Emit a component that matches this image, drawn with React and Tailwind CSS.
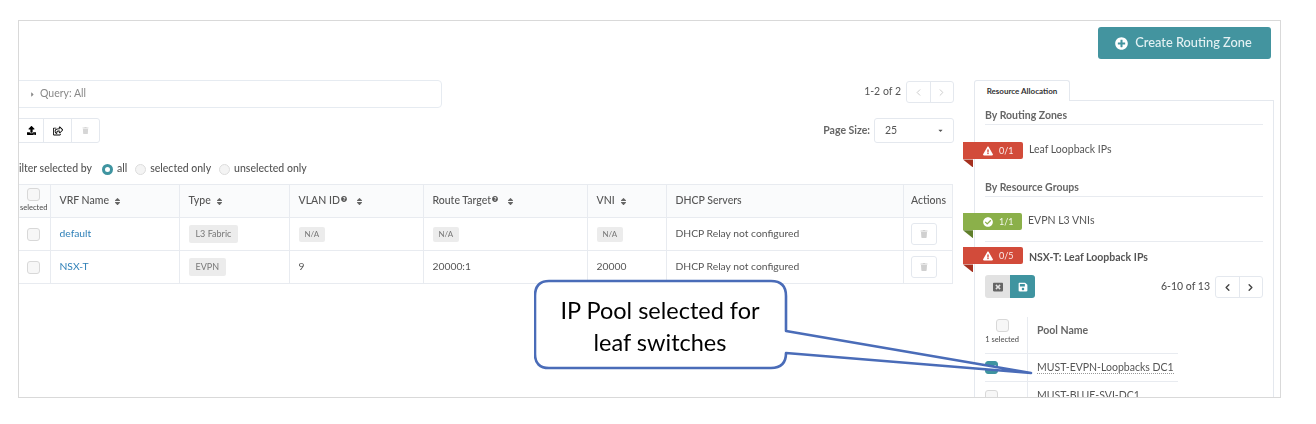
import React from "react";
import {
  FaPlusCircle,
  FaUpload,
  FaRegShareSquare,
  FaTrash,
  FaExclamationTriangle,
  FaCheckCircle,
  FaSave,
  FaWindowClose,
  FaSort,
  FaQuestionCircle,
  FaCaretRight,
  FaCaretDown,
  FaCheck,
} from "react-icons/fa";
import { FiChevronLeft, FiChevronRight } from "react-icons/fi";

const Checkbox = ({ checked }) => (
  <span
    className={`block w-[13px] h-[13px] rounded-[3px] border ${
      checked ? "bg-[#3f94a0] border-[#3f94a0]" : "bg-[#f7f7f7] border-[#d8d8d8]"
    }`}
  >
    {checked && <FaCheck className="text-white text-[8px] m-[2px]" />}
  </span>
);

const Radio = ({ checked }) =>
  checked ? (
    <span className="block w-[11px] h-[11px] rounded-full border-[3px] border-[#3f94a0] bg-white" />
  ) : (
    <span className="block w-[11px] h-[11px] rounded-full border border-[#dcdcdc] bg-[#f4f4f4]" />
  );

const Badge = ({ children, className = "" }) => (
  <span className={`inline-block bg-[#ececec] rounded-[2px] text-[#777] ${className}`}>{children}</span>
);

const Pager = ({ dim }) => (
  <div className={`flex w-[48px] h-[22px] border border-[#e4e8ee] rounded-[3px] bg-white ${dim ? "text-[#c8c8c8]" : "text-[#444]"}`}>
    <span className="flex-1 flex items-center justify-center border-r border-[#e4e8ee]">
      <FiChevronLeft className="text-[11px]" strokeWidth={dim ? 2 : 3} />
    </span>
    <span className="flex-1 flex items-center justify-center">
      <FiChevronRight className="text-[11px]" strokeWidth={dim ? 2 : 3} />
    </span>
  </div>
);

const Ribbon = ({ green, width, label, icon }) => (
  <div className={`relative -ml-[22px] h-[17px] rounded-r-[2px] flex items-center text-white text-[9px] ${width} ${green ? "bg-[#8bb04a]" : "bg-[#d24b3a]"}`}>
    <span className="ml-[20px] mr-[6px] text-[10px]">{icon}</span>
    <span className="opacity-90">{label}</span>
    <span
      className={`absolute left-0 top-full w-[10px] h-[8px] [clip-path:polygon(0_0,100%_0,100%_100%)] ${
        green ? "bg-[#5f7f2b]" : "bg-[#a5301f]"
      }`}
    />
  </div>
);

const HeadCell = ({ label, help, sort = true, className = "" }) => (
  <th className={`border-r border-[#e8ebf0] pl-[9px] pr-[7px] text-left font-medium text-[10.5px] text-[#555] ${className}`}>
    <span className="flex items-center">
      {label}
      {help && <FaQuestionCircle className="text-[6px] ml-[1px] -mt-[5px] text-[#555]" />}
      {sort && <FaSort className={`text-[9px] text-[#666] ${help ? "ml-[8px]" : "ml-[4px]"}`} />}
    </span>
  </th>
);

const TrashBtn = () => (
  <span className="flex items-center justify-center w-[26px] h-[22px] ml-[7px] border border-[#e4e8ee] rounded-[3px]">
    <FaTrash className="text-[8px] text-[#d0d0d0]" />
  </span>
);

const rows = [
  { name: "default", type: "L3 Fabric", vlan: null, rt: null, vni: null },
  { name: "NSX-T", type: "EVPN", vlan: "9", rt: "20000:1", vni: "20000" },
];

const NA = () => <Badge className="text-[8px] leading-[15px] px-[6px]">N/A</Badge>;

const Callout = () => (
  <div className="absolute left-[534px] top-[279px] w-[500px] h-[96px]">
    <svg width="500" height="96" className="absolute inset-0">
      <path
        d="M15 2 H237 Q252 2 252 17 V52 L497 94 L252 74 V74 Q252 89 237 89 H15 Q1 89 1 75 V17 Q1 2 15 2 Z"
        fill="white"
        stroke="#4a6cb8"
        strokeWidth="2.6"
        strokeLinejoin="round"
      />
    </svg>
    <div className="absolute left-0 top-[15px] w-[252px] text-center text-[23.5px] leading-[32px] text-black">
      IP Pool selected for
      <br />
      leaf switches
    </div>
  </div>
);

export default function App() {
  return (
    <div className="relative bg-white w-[1316px] h-[424px] pt-[20px] pl-[18px] font-['Lato',sans-serif] text-[#555]">
      <div className="w-[1263px] h-[378px] border border-[#d9d9d9] overflow-hidden">
        <div className="flex flex-col h-full blur-[0.4px]">
          <div className="flex justify-end pt-[6px] pr-[9px]">
            <button className="flex items-center justify-center w-[173px] h-[32px] pr-[2px] rounded-[3px] bg-[#43949f] text-[#e4f1f3] text-[12.8px] font-medium">
              <FaPlusCircle className="text-[13px] mr-[7px] text-white" />
              Create Routing Zone
            </button>
          </div>

          <div className="flex mt-[21px] gap-[20px]">
            <div className="w-[935px] shrink-0">
              <div className="flex justify-between items-start h-[28px]">
                <div className="-ml-[8px] w-[431px] h-[28px] border border-[#e6ebf1] rounded-[4px] flex items-center pl-[17px] text-[10.5px] text-[#888]">
                  <FaCaretRight className="text-[7px] mr-[4px]" />
                  Query: All
                </div>
                <div className="flex items-center mt-[1px] text-[10.5px]">
                  <span className="mr-[5px]">1-2 of 2</span>
                  <Pager dim />
                </div>
              </div>

              <div className="flex justify-between items-center mt-[10px] h-[25px]">
                <div className="-ml-[8px] flex h-[25px] w-[89px] border border-[#e4e8ee] rounded-[3px]">
                  <span className="w-[32px] flex items-center justify-center pl-[8px] border-r border-[#e4e8ee] text-black">
                    <FaUpload className="text-[9px]" />
                  </span>
                  <span className="w-[28px] flex items-center justify-center border-r border-[#e4e8ee] text-black">
                    <FaRegShareSquare className="text-[10px]" />
                  </span>
                  <span className="flex-1 flex items-center justify-center text-[#d6d6d6]">
                    <FaTrash className="text-[7px]" />
                  </span>
                </div>
                <div className="flex items-center text-[10.5px]">
                  <span className="font-bold mr-[4px] text-[#666]">Page Size:</span>
                  <div className="flex items-center justify-between w-[80px] h-[25px] border border-[#e4e8ee] rounded-[3px] pl-[10px] pr-[9px]">
                    25
                    <FaCaretDown className="text-[7px]" />
                  </div>
                </div>
              </div>

              <div className="flex items-center mt-[18px] h-[16px] -ml-[6px] text-[10.5px] font-medium whitespace-nowrap">
                <span className="mr-[10px]">Filter selected by</span>
                <Radio checked />
                <span className="ml-[4px] mr-[8px]">all</span>
                <Radio />
                <span className="ml-[4px] mr-[8px]">selected only</span>
                <Radio />
                <span className="ml-[4px]">unselected only</span>
              </div>

              <table className="mt-[7px] -ml-px w-[934px] table-fixed border-collapse text-[10.3px]">
                <colgroup>
                  <col className="w-[32px]" />
                  <col className="w-[129px]" />
                  <col className="w-[110px]" />
                  <col className="w-[134px]" />
                  <col className="w-[164px]" />
                  <col className="w-[79px]" />
                  <col className="w-[237px]" />
                  <col className="w-[49px]" />
                </colgroup>
                <thead>
                  <tr className="h-[33px] bg-[#fafbfc] border-y border-[#e8ebf0]">
                    <th className="border-r border-[#e8ebf0] font-normal">
                      <span className="flex flex-col items-center">
                        <Checkbox />
                        <span className="text-[7.5px] mt-[1px] font-medium">selected</span>
                      </span>
                    </th>
                    <HeadCell label="VRF Name" />
                    <HeadCell label="Type" />
                    <HeadCell label="VLAN ID" help />
                    <HeadCell label="Route Target" help />
                    <HeadCell label="VNI" />
                    <HeadCell label="DHCP Servers" sort={false} />
                    <th className="border-r border-[#e8ebf0] pl-[2px] text-center font-medium text-[10.5px] text-[#555]">Actions</th>
                  </tr>
                </thead>
                <tbody>
                  {rows.map((row) => (
                    <tr key={row.name} className="h-[33px] border-b border-[#e8ebf0]">
                      <td className="border-r border-[#e8ebf0]">
                        <span className="flex justify-center">
                          <Checkbox />
                        </span>
                      </td>
                      <td className="border-r border-[#e8ebf0] pl-[9px] pr-[7px] text-[#2f80b8]">{row.name}</td>
                      <td className="border-r border-[#e8ebf0] pl-[9px] pr-[7px]">
                        <Badge className="text-[9px] leading-[18px] px-[7px]">{row.type}</Badge>
                      </td>
                      <td className="border-r border-[#e8ebf0] pl-[9px] pr-[7px]">{row.vlan || <NA />}</td>
                      <td className="border-r border-[#e8ebf0] pl-[9px] pr-[7px]">{row.rt || <NA />}</td>
                      <td className="border-r border-[#e8ebf0] pl-[9px] pr-[7px]">{row.vni || <NA />}</td>
                      <td className="border-r border-[#e8ebf0] pl-[9px] pr-[7px]">DHCP Relay not configured</td>
                      <td className="border-r border-[#e8ebf0]">
                        <TrashBtn />
                      </td>
                    </tr>
                  ))}
                </tbody>
              </table>
            </div>

            <div className="w-[300px] shrink-0">
              <div className="w-[96px] h-[21px] border border-b-0 border-[#e4e8ee] rounded-t-[3px] flex items-center justify-center text-[8px] font-bold text-[#333] whitespace-nowrap bg-white relative z-10 -mb-px">
                Resource Allocation
              </div>
              <div className="border border-[#e4e8ee] h-[320px] pl-[10px] pr-[10px] pt-[7px] text-[10.5px]">
                <div className="font-bold text-[#666] pb-[3px] h-[17px] border-b border-[#e8ebf0]">By Routing Zones</div>
                <div className="flex items-center mt-[17px] gap-[6px]">
                  <Ribbon width="w-[60px]" label="0/1" icon={<FaExclamationTriangle />} />
                  <span className="mb-[2px]">Leaf Loopback IPs</span>
                </div>
                <div className="font-bold text-[#666] mt-[20px] h-[17px] border-b border-[#e8ebf0]">By Resource Groups</div>
                <div className="flex items-center mt-[16px] gap-[6px]">
                  <Ribbon green width="w-[59px]" label="1/1" icon={<FaCheckCircle />} />
                  <span className="mb-[2px]">EVPN L3 VNIs</span>
                </div>
                <div className="border-b border-[#e8ebf0] mt-[10px]" />
                <div className="flex items-center mt-[5px] gap-[6px]">
                  <Ribbon width="w-[60px]" label="0/5" icon={<FaExclamationTriangle />} />
                  <span className="mt-[3px] font-bold text-[#555]">NSX-T: Leaf Loopback IPs</span>
                </div>
                <div className="flex justify-between items-center mt-[10px] h-[23px]">
                  <div className="flex h-[23px] w-[50px] rounded-[3px] overflow-hidden">
                    <span className="flex-1 flex items-center justify-center bg-[#e2e2e2] text-[#666]">
                      <FaWindowClose className="text-[10px]" />
                    </span>
                    <span className="flex-1 flex items-center justify-center bg-[#3f94a0] text-white">
                      <FaSave className="text-[10px]" />
                    </span>
                  </div>
                  <div className="flex items-center mt-[1px]">
                    <span className="mr-[5px] font-medium">6-10 of 13</span>
                    <Pager />
                  </div>
                </div>
                <div className="w-[193px] mt-[19px]">
                  <div className="flex h-[37px] border-b border-[#e8ebf0]">
                    <div className="w-[43px] shrink-0 pt-[2px] pr-[8px] border-r border-[#e8ebf0] flex flex-col items-center">
                      <Checkbox />
                      <span className="text-[7.5px] mt-[2px] whitespace-nowrap font-medium">1 selected</span>
                    </div>
                    <div className="pl-[9px] pt-[6px] font-bold text-[#666]">Pool Name</div>
                  </div>
                  <div className="flex h-[28px] border-b border-[#e8ebf0]">
                    <div className="w-[43px] shrink-0 border-r border-[#e8ebf0] flex items-center">
                      <Checkbox checked />
                    </div>
                    <div className="pl-[9px] flex items-center">
                      <span className="border-b border-dotted border-[#999] leading-[12px]">MUST-EVPN-Loopbacks DC1</span>
                    </div>
                  </div>
                  <div className="flex h-[28px]">
                    <div className="w-[43px] shrink-0 border-r border-[#e8ebf0] flex items-center">
                      <Checkbox />
                    </div>
                    <div className="pl-[9px] flex items-center">MUST-BLUE-SVI-DC1</div>
                  </div>
                </div>
              </div>
            </div>
          </div>
        </div>
      </div>
      <Callout />
    </div>
  );
}
